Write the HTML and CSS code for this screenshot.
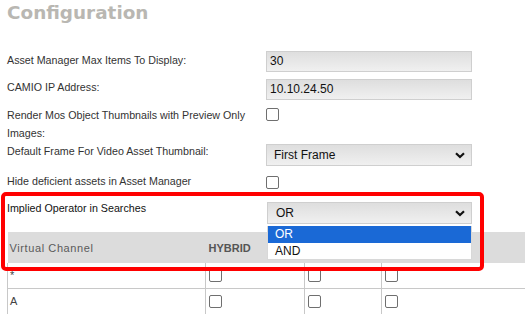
FILE: index.html
```html
<!DOCTYPE html>
<html lang="en">
<head>
    <meta charset="UTF-8">
    <title>Configuration</title>
    <link rel="stylesheet" href="styles.css">
</head>
<body>
    <div class="page">
        <h1>Configuration</h1>
        <div class="settings">
            <div class="row row-1">
                <label>Asset Manager Max Items To Display:</label>
                <div class="field">30</div>
            </div>
            <div class="row row-2">
                <label>CAMIO IP Address:</label>
                <div class="field">10.10.24.50</div>
            </div>
            <div class="row row-3">
                <label>Render Mos Object Thumbnails with Preview Only Images:</label>
                <span class="check"></span>
            </div>
            <div class="row row-4">
                <label>Default Frame For Video Asset Thumbnail:</label>
                <div class="field select">
                    <span>First Frame</span>
                    <svg width="10" height="7" viewBox="0 0 10 7"><path d="M1 1.2 L5 5 L9 1.2" fill="none" stroke="#111" stroke-width="2.2"/></svg>
                </div>
            </div>
            <div class="row row-5">
                <label>Hide deficient assets in Asset Manager</label>
                <span class="check"></span>
            </div>
            <div class="row row-6">
                <label class="dark">Implied Operator in Searches</label>
                <div class="field select op">
                    <span>OR</span>
                    <svg width="10" height="7" viewBox="0 0 10 7"><path d="M1 1.2 L5 5 L9 1.2" fill="none" stroke="#111" stroke-width="2.2"/></svg>
                </div>
            </div>
        </div>

        <table class="channels">
            <thead>
                <tr>
                    <th class="name">Virtual Channel</th>
                    <th class="hybrid">HYBRID</th>
                    <th></th>
                    <th></th>
                </tr>
            </thead>
            <tbody>
                <tr>
                    <td class="name">*</td>
                    <td><span class="check"></span></td>
                    <td><span class="check"></span></td>
                    <td><span class="check"></span></td>
                </tr>
                <tr>
                    <td class="name">A</td>
                    <td><span class="check"></span></td>
                    <td><span class="check"></span></td>
                    <td><span class="check"></span></td>
                </tr>
            </tbody>
        </table>

        <!-- open dropdown of the operator select -->
        <ul class="options">
            <li class="active">OR</li>
            <li>AND</li>
        </ul>

        <!-- red highlight drawn over the screenshot -->
        <div class="highlight"></div>
    </div>
</body>
</html>
```
FILE: styles.css
```css
body {
    margin: 0;
    font-family: "Liberation Sans", Arial, sans-serif;
    background-color: #fff;
    color: #333;
    overflow: hidden;
}
.page {
    position: relative;
    height: 314px;
    padding-left: 7px;
}
h1 {
    margin: 0;
    height: 51px;
    font-family: "DejaVu Sans", sans-serif;
    font-size: 18.4px;
    line-height: 26px;
    font-weight: bold;
    color: #b9b7b2;
}
.row {
    display: flex;
    align-items: flex-start;
}
.row label {
    width: 259px;
    font-size: 10.7px;
    line-height: 18px;
    color: #333;
}
.row label.dark {
    color: #111;
}
.row-1 { height: 28px; }
.row-2 { height: 28px; margin-top: -1px; }
.row-3 { height: 36px; }
.row-4 { height: 30px; }
.row-5 { height: 27px; }
.row-6 { height: 33px; }
.row-2 .field { margin-top: 1px; }
.row-3 label { width: 250px; margin-right: 9px; }
.row-3 .check { margin-top: 2px; }
.row-4 .field { margin-top: 2px; }
.row-5 .check { margin-top: 4px; }
.row-6 .field { margin-top: 3px; margin-left: 1px; width: 205px; }
.field {
    box-sizing: border-box;
    width: 206px;
    height: 21px;
    padding: 0 3px;
    border: 1px solid #cfcfcf;
    background: linear-gradient(#dedede, #f0f0f0);
    font-size: 12px;
    line-height: 19px;
    color: #111;
}
.select {
    display: flex;
    justify-content: space-between;
    align-items: center;
    height: 22px;
    padding: 0 6px 0 7px;
}
.select.op {
    padding-left: 8px;
}
.check {
    display: inline-block;
    box-sizing: border-box;
    width: 13px;
    height: 13px;
    border: 1px solid #6f6f6f;
    border-radius: 2px;
    background-color: #fff;
}
.channels {
    border-collapse: collapse;
    width: 540px;
    font-size: 11px;
}
.channels th {
    height: 31px;
    padding: 0;
    background-color: #dcdcdc;
    text-align: left;
    color: #5a5a5a;
    font-weight: normal;
}
.channels th.name {
    width: 196px;
    padding-left: 2px;
    letter-spacing: 0.6px;
}
.channels th.hybrid {
    width: 96px;
    padding-left: 3px;
    font-weight: bold;
    color: #555;
}
.channels th:nth-child(3) {
    width: 77px;
}
.channels td {
    height: 19px;
    padding: 6px 0 0 3px;
    vertical-align: top;
    border: 1px solid #c8c8c8;
    border-top: none;
}
.channels td.name {
    padding: 6px 0 0 2px;
    color: #444;
}
.options {
    position: absolute;
    left: 267px;
    top: 226px;
    width: 205px;
    box-sizing: border-box;
    margin: 0;
    padding: 0;
    list-style: none;
    background-color: #fff;
    border: 1px solid #d8d8d8;
    border-top: none;
    font-size: 12px;
}
.options li {
    height: 16px;
    line-height: 16px;
    padding-left: 7px;
    color: #111;
}
.options li.active {
    height: 17px;
    background-color: #1a69d6;
    color: #fff;
}
.highlight {
    position: absolute;
    left: 1px;
    top: 192px;
    width: 475px;
    height: 71px;
    border: 4px solid #ff0000;
    border-radius: 5px;
}
```
